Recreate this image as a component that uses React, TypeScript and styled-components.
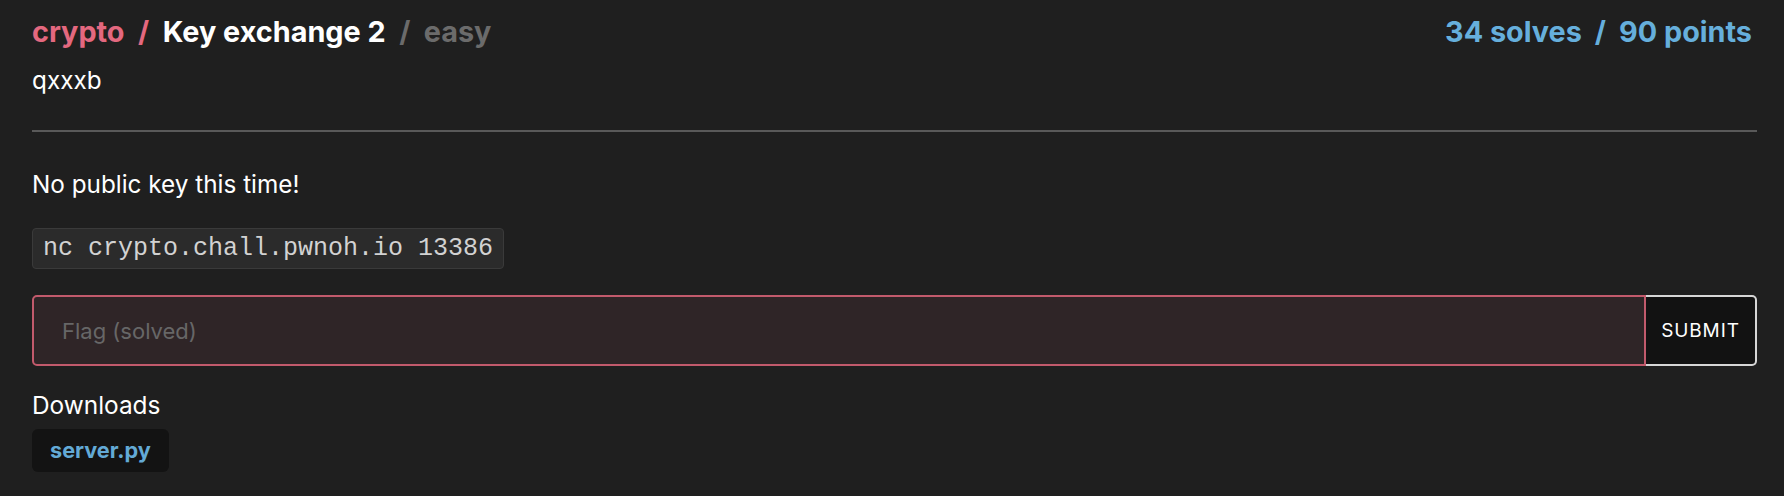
import React from "react";
import styled, { createGlobalStyle } from "styled-components";

const Global = createGlobalStyle`
  html, body { margin: 0; padding: 0; background: #1f1f1f; }
  body { font-family: Inter, "Noto Sans", sans-serif; color: #ffffff; }
  * { box-sizing: border-box; }
`;

const Page = styled.div`
  padding: 12px 27px 0 32px;
  display: flex;
  flex-direction: column;
`;

const Header = styled.div`
  display: flex;
  justify-content: space-between;
  align-items: baseline;
`;

const Title = styled.div`
  font-size: 28.8px;
  font-weight: 700;
  line-height: 40px;
  display: flex;
  gap: 13.5px;
`;

const Crumb = styled.span<{ $tone: "pink" | "white" | "gray" }>`
  color: ${(p) => (p.$tone === "pink" ? "#e4687f" : p.$tone === "white" ? "#ffffff" : "#6b6b6b")};
`;

const Stats = styled.div`
  font-size: 28.8px;
  font-weight: 700;
  line-height: 40px;
  color: #66afdc;
  display: flex;
  gap: 13px;
  padding-right: 5px;
`;

const Author = styled.div`
  font-size: 24.3px;
  line-height: 32px;
  margin-top: 12px;
`;

const Divider = styled.hr`
  border: none;
  height: 2px;
  background: #595959;
  margin: 34px 0 0;
`;

const Description = styled.p`
  font-size: 24.3px;
  line-height: 32px;
  margin: 36px 0 0;
`;

const Code = styled.code`
  align-self: flex-start;
  margin-top: 28px;
  font-family: "Liberation Mono", "Courier New", monospace;
  font-size: 25px;
  line-height: 39px;
  padding: 0 10px;
  color: #d2d2d2;
  background: #2b2b2b;
  border: 1px solid #3a3a3a;
  border-radius: 4px;
`;

const FlagRow = styled.form`
  display: flex;
  margin-top: 26px;
  height: 71px;
`;

const FlagInput = styled.input`
  flex: 1;
  min-width: 0;
  height: 100%;
  background: #2f2527;
  border: 2px solid #c25a6c;
  border-radius: 5px 0 0 5px;
  padding: 0 28px;
  font-family: Inter, "Noto Sans", sans-serif;
  font-size: 22px;
  color: #ffffff;
  outline: none;
  &::placeholder { color: #676767; }
`;

const Submit = styled.button`
  width: 111px;
  height: 100%;
  background: #121212;
  border: 2px solid #d6d6d6;
  border-left: none;
  border-radius: 0 5px 5px 0;
  color: #ffffff;
  font-family: Inter, "Noto Sans", sans-serif;
  font-size: 19px;
  letter-spacing: 0.9px;
  text-transform: uppercase;
  padding: 0;
`;

const SectionLabel = styled.div`
  font-size: 24.4px;
  line-height: 32px;
  margin-top: 23px;
`;

const Downloads = styled.div`
  display: flex;
  gap: 10px;
  margin-top: 8px;
`;

const FileLink = styled.a`
  display: inline-block;
  background: #131313;
  color: #63aad6;
  font-weight: 700;
  font-size: 21.7px;
  line-height: 43px;
  padding: 0 18px;
  border-radius: 6px;
  text-decoration: none;
`;

export default function App() {
  return (
    <>
      <Global />
      <Page>
        <Header>
          <Title>
            <Crumb $tone="pink">crypto</Crumb>
            <Crumb $tone="pink">/</Crumb>
            <Crumb $tone="white">Key exchange 2</Crumb>
            <Crumb $tone="gray">/</Crumb>
            <Crumb $tone="gray">easy</Crumb>
          </Title>
          <Stats>
            <span>34 solves</span>
            <span>/</span>
            <span>90 points</span>
          </Stats>
        </Header>
        <Author>qxxxb</Author>
        <Divider />
        <Description>No public key this time!</Description>
        <Code>nc crypto.chall.pwnoh.io 13386</Code>
        <FlagRow onSubmit={(e) => e.preventDefault()}>
          <FlagInput placeholder="Flag (solved)" />
          <Submit type="submit">Submit</Submit>
        </FlagRow>
        <SectionLabel>Downloads</SectionLabel>
        <Downloads>
          <FileLink href="#">server.py</FileLink>
        </Downloads>
      </Page>
    </>
  );
}
